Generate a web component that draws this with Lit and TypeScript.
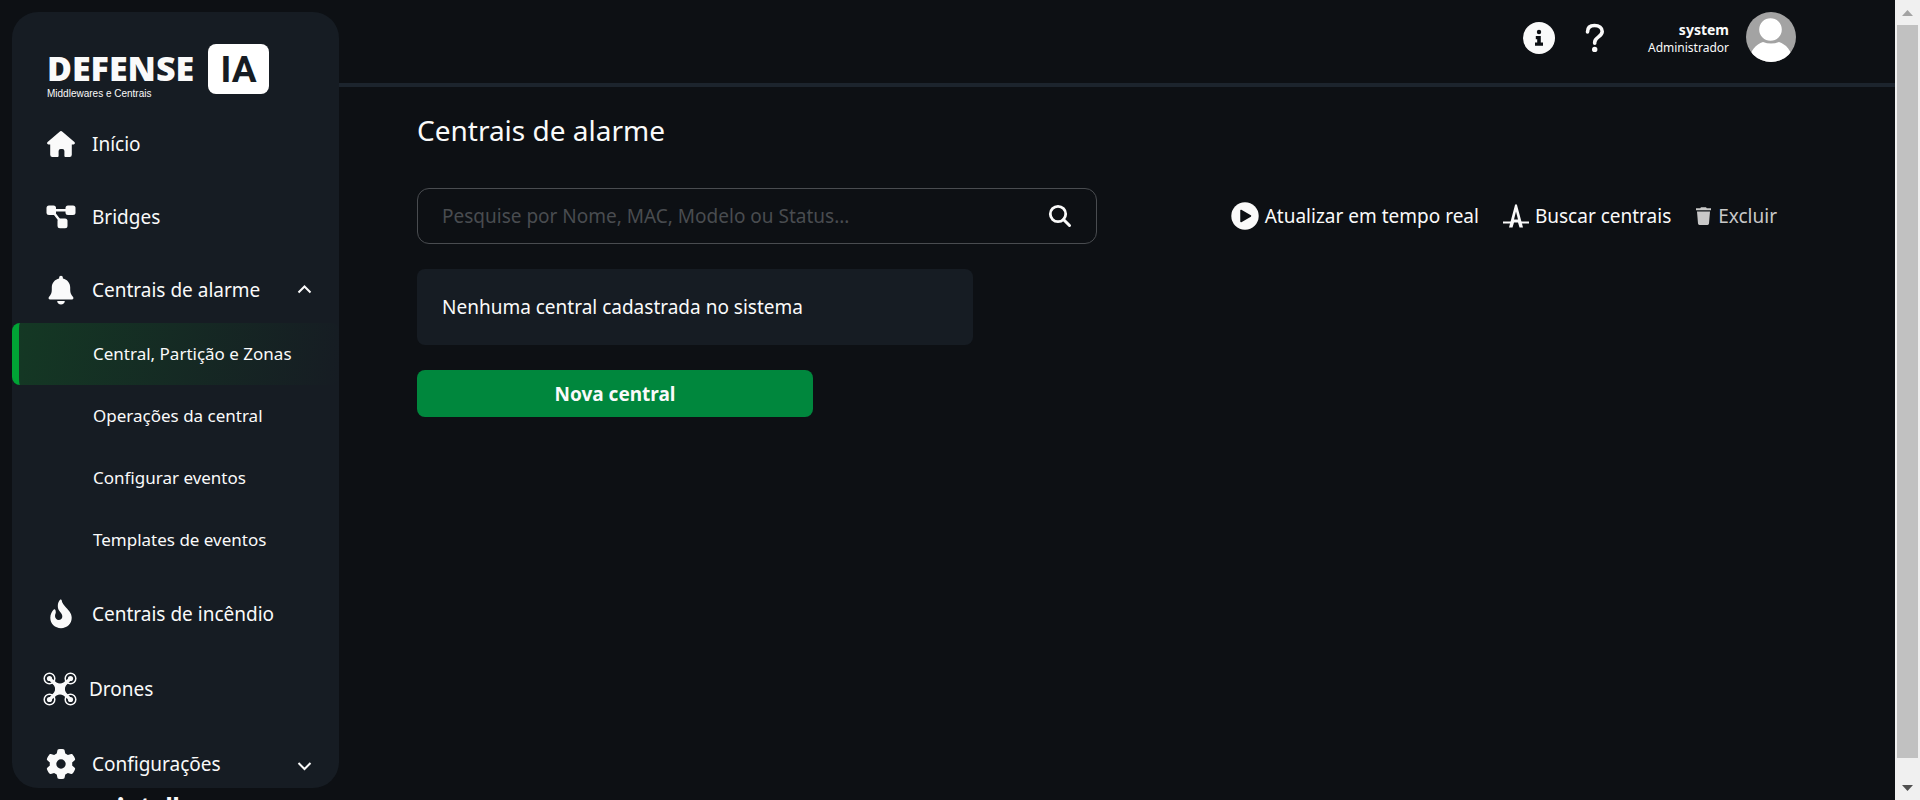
import { LitElement, html, css, nothing } from "lit";
import { customElement, property, state } from "lit/decorators.js";
import { classMap } from "lit/directives/class-map.js";

const icons = {
  home: html`<svg class="icon" viewBox="0 0 30 30" aria-hidden="true"><path fill="currentColor" d="M13.6 2.7a2 2 0 0 1 2.8 0l12 10.4c1 .9.6 2.3-.8 2.3h-1.8v10.4a2.200 2.200 0 0 1-2.200 2.200h-4.200a1 1 0 0 1-1-1v-5a2 2 0 0 0-2-2h-1.800a2 2 0 0 0-2 2v5a1 1 0 0 1-1 1H6.400a2.200 2.200 0 0 1-2.200-2.200V15.400H2.400c-1.400 0-1.800-1.400-.8-2.300z"/></svg>`,
  bridges: html`<svg class="icon" viewBox="0 0 30 30" aria-hidden="true"><g fill="currentColor"><rect x=".5" y="3.500" width="9.500" height="9.500" rx="2.500"/><rect x="19.500" y="3.500" width="10" height="9.500" rx="2.500"/><rect x="11.500" y="16.500" width="10" height="9.800" rx="2.500"/></g><path d="M9 8.200h12M8 11l6.500 8.500" stroke="currentColor" stroke-width="2.400" fill="none"/></svg>`,
  bell: html`<svg class="icon" viewBox="0 0 30 30" aria-hidden="true"><path fill="currentColor" d="M15 .8a1.900 1.900 0 0 1 1.900 1.900v.8c4.400.9 7.300 4.500 7.300 9v2.600c0 2.800 1 5 2.700 6.700 1.100 1.200.5 2.700-1 2.700H4.100c-1.500 0-2.100-1.500-1-2.700C4.800 20.100 5.800 17.900 5.800 15.100v-2.600c0-4.500 2.900-8.100 7.300-9v-.8A1.900 1.900 0 0 1 15 .8zM11.200 26h7.600c0 2-1.700 3.500-3.800 3.500S11.200 28 11.200 26z"/></svg>`,
  fire: html`<svg class="icon" viewBox="0 0 30 30" aria-hidden="true"><path fill="currentColor" d="M14.300.6c.5-.4 1.200-.2 1.300.4.500 3.400 2.200 5 4.600 7.700 2.700 3 5.500 5.700 5.500 10.100 0 6-4.700 10.400-10.700 10.400S4.300 24.800 4.300 18.800c0-3.800 1.700-6.500 3.500-8.300.5-.5 1.300-.3 1.600.4.4.9.400 1.500.400 2.900-.5 1.200-.8 2.200-.8 3.300 0 2.400 1.700 3.900 3.700 3.900s3.600-1.500 3.600-3.600c0-1.900-1-3-2.100-4.400-1.400-1.700-2.400-3.300-2.400-6.100 0-2.500 1-4.900 2.500-6.300z"/></svg>`,
  drone: html`<svg class="icon drone" viewBox="0 0 34 34" aria-hidden="true"><g fill="none" stroke="currentColor" stroke-width="1.500"><circle cx="6.500" cy="6.500" r="5.300"/><circle cx="27.500" cy="6.500" r="5.300"/><circle cx="6.500" cy="27.500" r="5.300"/><circle cx="27.500" cy="27.500" r="5.300"/></g><g fill="currentColor"><circle cx="6.500" cy="6.500" r="2.600"/><circle cx="27.500" cy="6.500" r="2.600"/><circle cx="6.500" cy="27.500" r="2.600"/><circle cx="27.500" cy="27.500" r="2.600"/><path d="M5.400 7.600 11 13.500c1.500 2.300 1.500 4.700 0 7L5.400 26.400l2.200 2.200 5.900-5.100c2.300-1.400 4.700-1.400 7 0l5.900 5.100 2.200-2.200-5.600-5.900c-1.500-2.300-1.500-4.700 0-7l5.600-5.900-2.200-2.200-5.900 5.100c-2.300 1.400-4.700 1.400-7 0L7.600 5.400z"/></g></svg>`,
  gear: html`<svg class="icon" viewBox="0 0 512 512" aria-hidden="true"><path fill="currentColor" d="M495.900 166.600c3.200 8.700.5 18.400-6.400 24.600l-43.300 39.400c1.100 8.300 1.700 16.800 1.700 25.400s-.6 17.100-1.700 25.400l43.300 39.400c6.900 6.200 9.600 15.900 6.400 24.600-4.400 11.900-9.700 23.300-15.800 34.300l-4.700 8.100c-6.600 11-14 21.400-22.100 31.200-5.900 7.200-15.700 9.600-24.500 6.800l-55.700-17.700c-13.400 10.300-28.200 18.900-44 25.400l-12.500 57.100c-2 9.100-9 16.300-18.200 17.800-13.800 2.300-28 3.500-42.500 3.500s-28.700-1.200-42.500-3.500c-9.200-1.500-16.200-8.700-18.200-17.800l-12.500-57.100c-15.800-6.500-30.600-15.100-44-25.400L83.100 425.900c-8.800 2.800-18.600.3-24.500-6.800-8.100-9.800-15.500-20.200-22.100-31.200l-4.700-8.100c-6.100-11-11.400-22.400-15.800-34.300-3.200-8.700-.5-18.400 6.400-24.600l43.300-39.400C64.600 273.100 64 264.600 64 256s.6-17.100 1.700-25.400L22.400 191.200c-6.900-6.200-9.600-15.900-6.400-24.600 4.400-11.900 9.700-23.300 15.800-34.300l4.700-8.100c6.600-11 14-21.400 22.100-31.200 5.900-7.200 15.700-9.600 24.500-6.800l55.700 17.700c13.400-10.300 28.200-18.900 44-25.400l12.500-57.100c2-9.100 9-16.300 18.200-17.800C227.300 1.200 241.500 0 256 0s28.700 1.200 42.500 3.500c9.200 1.500 16.200 8.700 18.200 17.800l12.500 57.100c15.800 6.500 30.600 15.100 44 25.400l55.700-17.700c8.800-2.800 18.600-.3 24.500 6.800 8.100 9.800 15.500 20.200 22.100 31.200l4.700 8.100c6.100 11 11.400 22.400 15.800 34.300zM256 336a80 80 0 1 0 0-160 80 80 0 1 0 0 160z"/></svg>`,
};

interface Entry {
  id: string;
  label: string;
  icon: unknown;
  children?: string[];
}

const entries: Entry[] = [
  { id: "inicio", label: "Início", icon: icons.home },
  { id: "bridges", label: "Bridges", icon: icons.bridges },
  {
    id: "alarme",
    label: "Centrais de alarme",
    icon: icons.bell,
    children: ["Central, Partição e Zonas", "Operações da central", "Configurar eventos", "Templates de eventos"],
  },
  { id: "incendio", label: "Centrais de incêndio", icon: icons.fire },
  { id: "drones", label: "Drones", icon: icons.drone },
  { id: "config", label: "Configurações", icon: icons.gear, children: [] },
];

@customElement("side-nav")
export class SideNav extends LitElement {
  @state() private open = "alarme";
  @property() current = "Central, Partição e Zonas";

  static styles = css`
    :host { display: block; min-width: 0; }
    .panel {
      box-sizing: border-box;
      height: calc(100vh - 24px);
      min-height: 400px;
      padding-top: 32px;
      border-radius: 26px;
      background: #161c23;
      overflow: hidden;
    }
    .logo { display: grid; grid-template-columns: 149px auto; justify-content: start; column-gap: 12px; padding-left: 35px; height: 67px; }
    .words { display: flex; flex-direction: column; white-space: nowrap; }
    .name { font: 800 34px/40px "Open Sans", sans-serif; padding-top: 4px; }
    .tag { font: 400 10px/12px "Liberation Sans", sans-serif; }
    .mark {
      display: grid; place-items: center;
      width: 61px; height: 50px; border-radius: 8px;
      background: #fff; color: #161c23;
      font: 700 37px/52px Roboto, sans-serif;
    }
    ul { list-style: none; margin: 0; padding: 0; }
    .menu { display: grid; gap: 7px; }
    .row {
      box-sizing: border-box;
      display: flex; align-items: center; gap: 16px;
      width: 100%; padding: 18px 27px 18px 34px;
      border: 0; background: none; color: #fafafa;
      font: inherit; text-align: left; text-decoration: none; cursor: pointer;
    }
    .icon { width: 30px; height: 30px; flex: none; }
    .drone { width: 34px; height: 34px; margin: 0 -4px 0 -3px; }
    .label { flex: 1; }
    .chevron { width: 15px; height: 15px; flex: none; }
    .subs { display: grid; grid-auto-rows: 62px; padding-bottom: 3px; }
    .sub {
      box-sizing: border-box;
      display: flex; align-items: center;
      height: 62px; padding-left: 81px;
      color: #fafafa; text-decoration: none; font-size: 17px;
      border-radius: 8px;
    }
    .current {
      padding-left: 74px;
      border-left: 7px solid #00a335;
      background: linear-gradient(100deg, #143824, #161c23);
    }
    .maker { padding: 5px 0 0 105px; font: 900 28px/28px Lato, sans-serif; }
  `;

  private chevron(up: boolean) {
    return html`<svg class="chevron" viewBox="0 0 15 15" aria-hidden="true">
      <path d=${up ? "M1.500 9.500 7.500 3.500l6 6" : "M1.500 6l6 6 6-6"} fill="none" stroke="currentColor" stroke-width="2"/>
    </svg>`;
  }

  private entry(e: Entry) {
    const isOpen = this.open === e.id;
    if (!e.children) {
      return html`<li><a class="row" href="#${e.id}">${e.icon}<span class="label">${e.label}</span></a></li>`;
    }
    return html`<li>
      <button class="row" type="button" aria-expanded=${isOpen ? "true" : "false"} @click=${() => (this.open = isOpen ? "" : e.id)}>
        ${e.icon}<span class="label">${e.label}</span>${this.chevron(isOpen)}
      </button>
      ${isOpen && e.children.length
        ? html`<ul class="subs">${e.children.map((c) => html`<li>
            <a href="#${e.id}" class=${classMap({ sub: true, current: c === this.current })}
              aria-current=${c === this.current ? "page" : nothing}>${c}</a></li>`)}</ul>`
        : nothing}
    </li>`;
  }

  render() {
    return html`
      <nav class="panel" aria-label="Principal">
        <div class="logo">
          <div class="words"><span class="name">DEFENSE</span><span class="tag">Middlewares e Centrais</span></div>
          <span class="mark">IA</span>
        </div>
        <ul class="menu">${entries.map((e) => this.entry(e))}</ul>
      </nav>
      <div class="maker">intelbras</div>
    `;
  }
}

@customElement("top-bar")
export class TopBar extends LitElement {
  static styles = css`
    :host { display: block; }
    .bar {
      box-sizing: border-box;
      display: flex; justify-content: flex-end; align-items: flex-start;
      height: 87px; padding: 12px 99px 0 0;
      border-bottom: 4px solid #1c242d;
    }
    button { display: grid; place-items: center; height: 52px; padding: 0; border: 0; background: none; color: #fafafa; cursor: pointer; }
    .info { width: 32px; margin-right: 30px; }
    .help { width: 20px; margin-right: 43px; }
    .user { display: flex; flex-direction: column; align-items: flex-end; padding-top: 8px; margin-right: 17px; }
    .name { font-weight: 700; font-size: 14px; line-height: 20px; }
    .role { font-size: 12px; line-height: 16px; }
    .avatar { width: 50px; height: 50px; }
  `;

  render() {
    return html`<header class="bar">
      <button class="info" type="button" aria-label="Informações">
        <svg width="32" height="32" viewBox="0 0 32 32"><circle cx="16" cy="16" r="16" fill="currentColor"/><g fill="#0d1014"><circle cx="16" cy="10" r="2.200"/><path d="M12.800 14h5v6.600h2.200v3.200h-8v-3.200h2.200v-3.400h-1.400z"/></g></svg>
      </button>
      <button class="help" type="button" aria-label="Ajuda">
        <svg width="20" height="30" viewBox="0 0 20 30"><path d="M2.500 9C2.500 4.600 5.300 2.500 9.500 2.500c4.700 0 7.700 2.200 7.700 6 0 5.400-7.500 5.300-7.500 10.800v1" fill="none" stroke="currentColor" stroke-width="3.600" stroke-linecap="round"/><circle cx="9.700" cy="26.400" r="2.700" fill="currentColor"/></svg>
      </button>
      <div class="user"><span class="name">system</span><span class="role">Administrador</span></div>
      <svg class="avatar" viewBox="0 0 50 50" role="img" aria-label="system">
        <defs><clipPath id="round"><circle cx="25" cy="25" r="25"/></clipPath></defs>
        <g clip-path="url(#round)"><rect width="50" height="50" fill="#a3a3a3"/><path d="M3 50C4 38 10 32.500 17 30q8 3 16 0c7 2.500 13 8 14 20z" fill="#fff"/><circle cx="24.500" cy="17.500" r="12.300" fill="#fff" stroke="#a3a3a3" stroke-width="2"/></g>
      </svg>
    </header>`;
  }
}

@customElement("scroll-rail")
export class ScrollRail extends LitElement {
  static styles = css`
    :host { display: grid; grid-template-rows: 25px 1fr 25px; width: 25px; height: 100vh; background: #f0f0f0; }
    .arrow { display: block; width: 11px; height: 6px; margin: 10px 7px; }
    .thumb { height: calc(100% - 17px); margin: 0 2px; background: #c1c1c1; }
  `;

  render() {
    return html`
      <svg class="arrow" viewBox="0 0 11 6"><path d="M0 6 5.500 0 11 6z" fill="#a3a3a3"/></svg>
      <div class="thumb"></div>
      <svg class="arrow" viewBox="0 0 11 6"><path d="M0 0 5.500 6 11 0z" fill="#505050"/></svg>
    `;
  }
}

@customElement("app-root")
export class AppRoot extends LitElement {
  static styles = css`
    :host {
      display: grid;
      grid-template-columns: 327px minmax(0, 1fr) 25px;
      height: 100vh;
      padding-left: 12px;
      box-sizing: border-box;
      overflow: hidden;
      background: #0d1014;
      color: #fafafa;
      font: 400 19px/28px "Noto Sans", sans-serif;
    }
    side-nav { padding-top: 12px; }
    main { padding: 25px 118px 0 78px; }
    h1 { margin: 0 0 40px; font-weight: 400; font-size: 28px; line-height: 36px; }
    .tools { display: flex; justify-content: space-between; align-items: center; gap: 24px; }
    .search {
      box-sizing: border-box;
      display: flex; align-items: center;
      flex: 0 1 680px; height: 56px; padding: 0 24px;
      border: 1px solid #494c50; border-radius: 12px;
    }
    .search input { flex: 1; min-width: 0; border: 0; padding: 0; outline: 0; background: none; color: #fafafa; font: inherit; }
    .search input::placeholder { color: #494c50; opacity: 1; }
    .find { width: 24px; height: 24px; padding: 0; border: 0; background: none; color: #fafafa; cursor: pointer; }
    .actions { display: flex; align-items: center; gap: 24px; }
    .action { display: flex; align-items: center; gap: 6px; padding: 0; border: 0; background: none; color: #fafafa; font: inherit; white-space: nowrap; cursor: pointer; }
    .action:disabled { color: #c8c8c8; cursor: default; }
    .empty { box-sizing: border-box; max-width: 556px; margin: 25px 0; padding: 24px 25px; border-radius: 8px; background: #161c23; }
    .new { width: 396px; max-width: 100%; height: 47px; border: 0; border-radius: 8px; background: #00873d; color: #fafafa; font: inherit; font-weight: 700; cursor: pointer; }
  `;

  render() {
    return html`
      <side-nav></side-nav>
      <div>
        <top-bar></top-bar>
        <main>
          <h1>Centrais de alarme</h1>
          <div class="tools">
            <form class="search" role="search" @submit=${(e: Event) => e.preventDefault()}>
              <input type="text" aria-label="Pesquisar centrais" placeholder="Pesquise por Nome, MAC, Modelo ou Status..." />
              <button class="find" type="submit" aria-label="Pesquisar">
                <svg width="24" height="24" viewBox="0 0 24 24"><circle cx="10" cy="10" r="7.700" fill="none" stroke="currentColor" stroke-width="2.800"/><path d="M15.500 15.500 21.500 21.500" stroke="currentColor" stroke-width="3" stroke-linecap="round"/></svg>
              </button>
            </form>
            <div class="actions">
              <button class="action" type="button">
                <svg width="28" height="28" viewBox="0 0 28 28"><circle cx="14" cy="14" r="13.700" fill="currentColor"/><path d="M10 8.500v11L19.500 14z" fill="#0d1014" stroke="#0d1014" stroke-width="1.500" stroke-linejoin="round"/></svg>
                Atualizar em tempo real
              </button>
              <button class="action" type="button">
                <svg width="26" height="24" viewBox="0 0 26 24"><path d="M13 0 12 1 6 23.500h3.500L11 18.500h4l1.500 5H20L14 1zM13 7.500l2 8h-4z" fill="currentColor" fill-rule="evenodd"/><path d="M0 18.500h8M18 18.500h8" stroke="currentColor" stroke-width="2" fill="none"/></svg>
                Buscar centrais
              </button>
              <button class="action" type="button" disabled>
                <svg width="17" height="20" viewBox="0 0 17 20"><path d="M6 1.200h5l.8 1H16v2H1v-2h4.200zM2 5.400h13l-1 12.200a1.500 1.500 0 0 1-1.500 1.400h-8A1.500 1.500 0 0 1 3 17.600z" fill="currentColor"/></svg>
                Excluir
              </button>
            </div>
          </div>
          <p class="empty">Nenhuma central cadastrada no sistema</p>
          <button class="new" type="button">Nova central</button>
        </main>
      </div>
      <scroll-rail aria-hidden="true"></scroll-rail>
    `;
  }
}
